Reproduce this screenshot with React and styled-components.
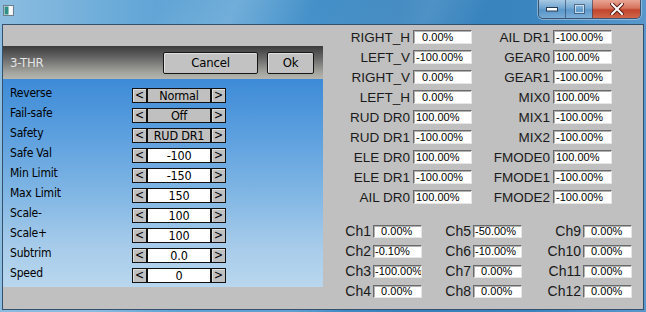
import React from 'react';
import styled, { createGlobalStyle } from 'styled-components';

const NARROW = `"Liberation Sans Narrow", "DejaVu Sans Condensed", "Liberation Sans", sans-serif`;
const ARIAL = `"Liberation Sans", Arial, sans-serif`;

const GlobalStyle = createGlobalStyle`
  html, body {
    margin: 0;
    padding: 0;
    overflow: hidden;
    background: #fff;
  }
`;

const mixes = [
  ['RIGHT_H', '  0.00%', 'AIL DR1', '-100.00%'],
  ['LEFT_V', '-100.00%', 'GEAR0', '100.00%'],
  ['RIGHT_V', '  0.00%', 'GEAR1', '-100.00%'],
  ['LEFT_H', '  0.00%', 'MIX0', '100.00%'],
  ['RUD DR0', '100.00%', 'MIX1', '-100.00%'],
  ['RUD DR1', '-100.00%', 'MIX2', '-100.00%'],
  ['ELE DR0', '100.00%', 'FMODE0', '100.00%'],
  ['ELE DR1', '-100.00%', 'FMODE1', '-100.00%'],
  ['AIL DR0', '100.00%', 'FMODE2', '-100.00%'],
];

const channels = [
  ['Ch1', '  0.00%', 'Ch5', '-50.00%', 'Ch9', '  0.00%'],
  ['Ch2', '-0.10%', 'Ch6', '-10.00%', 'Ch10', '  0.00%'],
  ['Ch3', '-100.00%', 'Ch7', '  0.00%', 'Ch11', '  0.00%'],
  ['Ch4', '  0.00%', 'Ch8', '  0.00%', 'Ch12', '  0.00%'],
];

const fields = [
  { label: 'Reverse', value: 'Normal' },
  { label: 'Fail-safe', value: 'Off' },
  { label: 'Safety', value: 'RUD DR1' },
  { label: 'Safe Val', value: '-100', edit: true },
  { label: 'Min Limit', value: '-150', edit: true },
  { label: 'Max Limit', value: '150', edit: true },
  { label: 'Scale-', value: '100', edit: true },
  { label: 'Scale+', value: '100', edit: true },
  { label: 'Subtrim', value: '0.0', edit: true },
  { label: 'Speed', value: '0', edit: true },
];

const App = () => {
  return (
    <>
      <GlobalStyle />
      <Window>
        <TitleBar>
          <AppIcon viewBox="0 0 11 11" width="11" height="11">
            <rect x="0.5" y="0.5" width="10" height="10" fill="#e8eef2" stroke="#6d7f8c" />
            <rect x="1.5" y="1.5" width="4" height="8" fill="#2f8f86" />
            <rect x="6" y="1.5" width="3.5" height="8" fill="#f6f8fa" />
          </AppIcon>
          <CaptionGroup>
            <CaptionButton $w={26}>
              <svg width="12" height="6" viewBox="0 0 12 6">
                <rect x="0.5" y="1.5" width="11" height="3.5" fill="#fff" stroke="#2a3b52" />
              </svg>
            </CaptionButton>
            <CaptionButton $w={26}>
              <svg width="11" height="10" viewBox="0 0 11 10">
                <rect x="0.5" y="0.5" width="10" height="9" fill="none" stroke="#2a3b52" strokeOpacity="0.6" />
                <rect x="1.5" y="1.5" width="8" height="7" fill="none" stroke="#fff" strokeOpacity="0.6" />
              </svg>
            </CaptionButton>
            <CaptionButton $w={47} $close>
              <svg width="14" height="12" viewBox="0 0 14 12">
                <path d="M2 1 L12 11 M12 1 L2 11" stroke="#5a1d14" strokeWidth="4" strokeLinecap="square" />
                <path d="M2 1 L12 11 M12 1 L2 11" stroke="#fff" strokeWidth="2" strokeLinecap="square" />
              </svg>
            </CaptionButton>
          </CaptionGroup>
        </TitleBar>
        <Client>
          <Panel>
            <PanelHeader>
              <PanelTitle>3-THR</PanelTitle>
              <HeaderButton $w={95}>Cancel</HeaderButton>
              <HeaderButton $w={47}>Ok</HeaderButton>
            </PanelHeader>
            <FieldList>
              {fields.map(f => (
                <FieldRow key={f.label}>
                  <FieldLabel>{f.label}</FieldLabel>
                  <Stepper>
                    <ArrowButton>&lt;</ArrowButton>
                    <ValueBox $edit={f.edit}>{f.value}</ValueBox>
                    <ArrowButton>&gt;</ArrowButton>
                  </Stepper>
                </FieldRow>
              ))}
            </FieldList>
          </Panel>
          <Monitor>
            <MixGrid>
              {mixes.map(row => (
                <React.Fragment key={row[0]}>
                  <MixLabel>{row[0]}</MixLabel>
                  <NumBox>{row[1]}</NumBox>
                  <MixLabel>{row[2]}</MixLabel>
                  <NumBox>{row[3]}</NumBox>
                </React.Fragment>
              ))}
            </MixGrid>
            <ChannelGrid>
              {channels.map(row => (
                <React.Fragment key={row[0]}>
                  <ChLabel>{row[0]}</ChLabel>
                  <ChBox>{row[1]}</ChBox>
                  <ChLabel>{row[2]}</ChLabel>
                  <ChBox>{row[3]}</ChBox>
                  <ChLabel>{row[4]}</ChLabel>
                  <ChBox>{row[5]}</ChBox>
                </React.Fragment>
              ))}
            </ChannelGrid>
          </Monitor>
        </Client>
      </Window>
    </>
  );
};

const Window = styled.div`
  width: 646px;
  height: 312px;
  display: flex;
  flex-direction: column;
  box-sizing: border-box;
  background:
    linear-gradient(115deg, rgba(255,255,255,0) 20%, rgba(255,255,255,0.18) 30%, rgba(255,255,255,0) 40%, rgba(255,255,255,0.12) 55%, rgba(255,255,255,0) 62%),
    linear-gradient(90deg, #8cbde0 0%, #64a7d7 22%, #4c97ce 42%, #3582bd 62%, #3a84bf 82%, #5898cc 100%);
`;

const TitleBar = styled.div`
  height: 24px;
  flex: none;
  display: flex;
  justify-content: space-between;
  align-items: flex-start;
  padding-left: 3px;
`;

const AppIcon = styled.svg`
  margin-top: 5px;
`;

const CaptionGroup = styled.div`
  display: flex;
  height: 18px;
  margin-right: 5px;
  border: 1px solid #3c5370;
  border-top: none;
  border-radius: 0 0 5px 5px;
  overflow: hidden;
  box-shadow: 0 0 0 1px rgba(255,255,255,0.35);
`;

const CaptionButton = styled.div`
  width: ${p => p.$w}px;
  display: flex;
  align-items: center;
  justify-content: center;
  border-left: 1px solid rgba(40,60,90,0.6);
  &:first-child { border-left: none; }
  background: ${p => p.$close
    ? 'linear-gradient(180deg, #e8a493 0%, #d6745e 45%, #c0452c 55%, #d0664a 100%)'
    : 'linear-gradient(180deg, rgba(255,255,255,0.55) 0%, rgba(255,255,255,0.25) 45%, rgba(160,190,220,0.25) 55%, rgba(190,215,240,0.45) 100%)'};
`;

const Client = styled.div`
  flex: 1;
  margin: 0 2px 2px 2px;
  border: 1px solid #34506c;
  background: #c0c0c0;
  display: flex;
  align-items: flex-start;
`;

const Panel = styled.div`
  width: 320px;
  margin-top: 21px;
  display: flex;
  flex-direction: column;
`;

const PanelHeader = styled.div`
  height: 33px;
  display: flex;
  align-items: center;
  gap: 9px;
  padding: 0 9px 0 7px;
  background: linear-gradient(180deg, #3a3a3a 0%, #6c6c6c 40%, #a4a49e 80%, #b6b6b0 100%);
`;

const PanelTitle = styled.div`
  flex: 1;
  color: #e4e4e4;
  font: 13px ${NARROW};
  letter-spacing: -0.2px;
`;

const HeaderButton = styled.div`
  width: ${p => p.$w}px;
  height: 22px;
  box-sizing: border-box;
  border: 1px solid #161616;
  border-radius: 2px;
  background: #c2c2c2;
  box-shadow: inset 1px 1px 0 #e2e2e2;
  display: flex;
  align-items: center;
  justify-content: center;
  font: 13px ${NARROW};
  letter-spacing: -0.2px;
  color: #000;
`;

const FieldList = styled.div`
  padding: 6px 0 2px 7px;
  background: linear-gradient(180deg, #3d8bd7 0%, #5a9ede 25%, #80b6e4 55%, #a6cbea 80%, #b9d7ee 100%);
`;

const FieldRow = styled.div`
  height: 20px;
  display: flex;
  align-items: center;
`;

const FieldLabel = styled.div`
  width: 122px;
  align-self: flex-start;
  font: 12px/17px ${NARROW};
  letter-spacing: -0.2px;
  color: #000;
`;

const Stepper = styled.div`
  display: flex;
  height: 15px;
`;

const ArrowButton = styled.div`
  width: 15px;
  box-sizing: border-box;
  border: 1px solid #111;
  background: #c0c0c0;
  box-shadow: inset 1px 1px 0 #e0e0e0;
  font: 12px/13px ${NARROW};
  text-align: center;
  color: #000;
`;

const ValueBox = styled.div`
  width: 64px;
  box-sizing: border-box;
  border: 1px solid #111;
  background: ${p => (p.$edit ? '#fff' : '#c0c0c0')};
  font: 12.5px/13px ${NARROW};
  letter-spacing: -0.2px;
  text-align: center;
  color: #000;
`;

const Monitor = styled.div`
  flex: 1;
  padding-top: 2px;
`;

const MixGrid = styled.div`
  display: grid;
  grid-template-columns: 90px 59px 81px 59px;
  grid-auto-rows: 20px;
  align-items: center;
`;

const MixLabel = styled.div`
  text-align: right;
  padding-right: 3px;
  font: 13.5px ${ARIAL};
  color: #1a1a1a;
  white-space: nowrap;
`;

const NumBox = styled.div`
  height: 14px;
  box-sizing: border-box;
  border: 1px solid;
  border-color: #6a6a6a #e6e6e6 #e6e6e6 #6a6a6a;
  box-shadow: inset 1px 1px 0 #b0b0b0;
  background: #fff;
  padding-left: 2px;
  font: 11px/12px ${ARIAL};
  color: #000;
  white-space: pre;
  overflow: hidden;
`;

const ChannelGrid = styled.div`
  margin-top: 14px;
  display: grid;
  grid-template-columns: 50px 49px 51px 49px 61px 49px;
  grid-auto-rows: 20px;
  align-items: center;
`;

const ChLabel = styled(MixLabel)`
  padding-right: 2px;
  font-size: 14px;
`;

const ChBox = styled(NumBox)`
  height: 13px;
  padding-left: 1px;
  line-height: 11px;
`;

export default App;
